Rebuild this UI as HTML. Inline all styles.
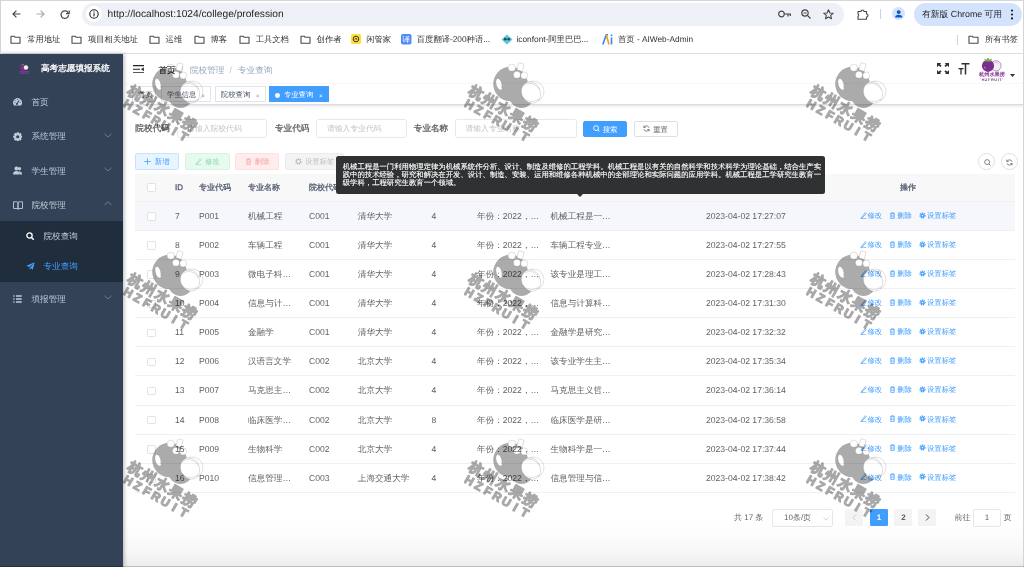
<!DOCTYPE html>
<html><head><meta charset="utf-8">
<style>
*{box-sizing:border-box;margin:0;padding:0}
html,body{width:1024px;height:567px;overflow:hidden;background:#fff}
#wrap{position:absolute;left:0;top:0;width:1024px;height:567px;will-change:transform}
body{font-family:"Liberation Sans",sans-serif;text-rendering:geometricPrecision;position:relative;color:#606266}
.abs{position:absolute}
/* browser chrome */
#top{position:absolute;left:0;top:0;width:1024px;height:27px;background:#fff;box-shadow:inset 0 1px 0 #d6d6d6}
#bmbar{position:absolute;left:0;top:27px;width:1024px;height:26.5px;background:#fff;border-bottom:1px solid #e3e3e3}
#leftedge{position:absolute;left:0;top:0;width:1px;height:53px;background:#d3d3d8;z-index:50}
#rightedge{position:absolute;left:1022.8px;top:0;width:1.2px;height:567px;background:#d5d5d5;z-index:50}
#botedge{position:absolute;left:0;top:565.6px;width:1024px;height:1.4px;background:rgba(0,0,0,0.25);z-index:50}
.pill{position:absolute;left:82.3px;top:3px;width:761.5px;height:22.5px;border-radius:11.25px;background:#edf0f6}
.url{position:absolute;left:107.5px;top:7.5px;font-size:10.2px;color:#1f1f1f;white-space:nowrap;line-height:13px}
.bm{position:absolute;top:26.3px;height:26px;display:flex;align-items:center;white-space:nowrap;font-size:8.3px;color:#333}
.bm svg{margin-right:6px}
.bm span{line-height:10px}
/* sidebar */
#side{position:absolute;left:0;top:53.5px;width:123px;height:514px;background:#334256;z-index:10;box-shadow:1px 0 4px rgba(0,21,41,.32)}
.logo-t{position:absolute;left:41px;top:62px;font-size:8.6px;-webkit-text-stroke:0.3px #fff;color:#fff;white-space:nowrap;line-height:12px}
.mi{position:absolute;left:0;width:123px;height:34.4px;color:#bfcbd9;font-size:8.6px;white-space:nowrap}
.mi .t{position:absolute;left:31.5px;top:0;line-height:34.4px}
.mi .ic{position:absolute;left:12.5px;top:12.7px}
.mi .chev{position:absolute;left:103.5px;top:13.3px}
.sub{position:absolute;left:0;top:220.6px;width:123px;height:61.4px;background:#1f2d3d}
.si{position:absolute;left:0;width:123px;height:30.7px;font-size:8.6px;white-space:nowrap}
.si .t{position:absolute;left:43.5px;line-height:30.7px}
.si .ic{position:absolute;left:25.5px;top:11px}
/* navbar */
#nav{position:absolute;left:123px;top:53.5px;width:900px;height:30.7px;background:#fff;box-shadow:0 1px 4px rgba(0,21,41,.08)}
.bc{position:absolute;top:63.5px;font-size:8.6px;line-height:12px;white-space:nowrap}
/* tags */
#tags{position:absolute;left:123px;top:84.2px;width:900px;height:20.9px;background:#fff;border-bottom:1px solid #d8dce5;box-shadow:0 1px 3px 0 rgba(0,0,0,.12),0 0 3px 0 rgba(0,0,0,.04)}
.tag{position:absolute;top:86.4px;height:16px;border:0.6px solid #e1e4ea;background:#fff;color:#495060;font-size:7.37px;line-height:15px;white-space:nowrap}
.tag .x{position:absolute;top:1.3px;font-size:6.5px;color:#999}
/* form */
.lbl{position:absolute;top:122px;font-size:8.6px;-webkit-text-stroke:0.3px #606266;color:#606266;line-height:12px;white-space:nowrap}
.inp{position:absolute;top:118.8px;height:19.3px;border:0.6px solid #e6e8ec;border-radius:2.5px;background:#fff}
.inp span{position:absolute;left:9.5px;top:0;line-height:18.5px;font-size:7.8px;color:#c0c4cc;white-space:nowrap}
.btn{position:absolute;height:16.6px;border-radius:2px;font-size:7.37px;line-height:15.4px;white-space:nowrap;text-align:center;border:0.6px solid}
/* table */
#tbl{position:absolute;left:135px;top:174px;width:879.5px;height:320px}
.th{position:absolute;left:0;top:0;width:879.5px;height:28px;background:#f8f8f9;border-bottom:0.6px solid #eef0f4}
.th span{position:absolute;top:0;line-height:27.4px;font-size:8px;-webkit-text-stroke:0.28px #515a6e;color:#515a6e;white-space:nowrap}
.tr{position:absolute;left:0;width:879.5px;height:29.08px;border-bottom:0.6px solid #eef0f4}
.td{position:absolute;top:0;line-height:28.6px;font-size:8.6px;color:#606266;white-space:nowrap}
.cb{position:absolute;left:12.3px;top:10.3px;width:8.6px;height:8.6px;border:0.6px solid #dfe2e8;border-radius:1.3px;background:#fff}
.ops{position:absolute;left:724.5px;top:0;line-height:28.6px;font-size:7.37px;color:#409eff;white-space:nowrap}
.op{margin-right:7px}
.op svg{vertical-align:-0.5px;margin-right:1px}
.circ{position:absolute;top:153px;width:16.8px;height:16.8px;border:0.6px solid #dcdfe6;border-radius:50%;background:#fff}
/* tooltip */
#tip{position:absolute;left:336.3px;top:155.6px;width:488.7px;height:38px;background:#303133;border-radius:2.5px;color:#fff;font-size:7.37px;line-height:8.1px;padding:7.3px 6.4px;z-index:20;-webkit-text-stroke:0.12px #fff}
.tl{white-space:nowrap;height:8.1px}
#tip:after{content:"";position:absolute;left:241px;bottom:-3.6px;border-left:3.7px solid transparent;border-right:3.7px solid transparent;border-top:3.7px solid #303133}
/* pagination */
.pg{position:absolute;top:509.3px;height:17px;font-size:8px;line-height:17px;white-space:nowrap;color:#606266}
.pbtn{position:absolute;top:509.3px;height:17px;width:18.2px;background:#f4f4f5;border-radius:1.3px;text-align:center;font-size:8px;font-weight:bold;line-height:17px;color:#606266}
.wmw{position:absolute;pointer-events:none}
#main{position:absolute;left:123px;top:54px;width:900px;height:513px;overflow:hidden;z-index:30;pointer-events:none}
#botfade{position:absolute;left:123px;top:518px;width:900px;height:48px;background:linear-gradient(rgba(0,0,0,0),rgba(0,0,0,0.012) 40%,rgba(0,0,0,0.035) 75%,rgba(0,0,0,0.075));z-index:40}
</style></head><body><div id="wrap">
<div id="top">
 <svg class="abs" style="left:11.5px;top:10px" width="9" height="8" viewBox="0 0 9 8"><path d="M8.5 4 H1 M4.4 0.6 L1 4 L4.4 7.4" fill="none" stroke="#474747" stroke-width="1.2"/></svg>
 <svg class="abs" style="left:35.5px;top:10px" width="9" height="8" viewBox="0 0 9 8"><path d="M0.5 4 H8 M4.6 0.6 L8 4 L4.6 7.4" fill="none" stroke="#a8a8a8" stroke-width="1.1"/></svg>
 <svg class="abs" style="left:59.5px;top:9.5px" width="10" height="9" viewBox="0 0 10 9"><path d="M8.3 3 A3.8 3.8 0 1 0 8.6 5.2" fill="none" stroke="#474747" stroke-width="1.2"/><path d="M9.2 0.4 V3.6 H6" fill="none" stroke="#474747" stroke-width="1.2"/></svg>
 <div class="pill"></div>
 <div class="abs" style="left:85.7px;top:5.7px;width:16px;height:16px;border-radius:50%;background:#fff"></div>
 <svg class="abs" style="left:88.6px;top:8.6px" width="10" height="10" viewBox="0 0 10 10"><circle cx="5" cy="5" r="4.2" fill="none" stroke="#1f1f1f" stroke-width="1.1"/><rect x="4.45" y="4.2" width="1.1" height="3.2" fill="#1f1f1f"/><circle cx="5" cy="2.9" r="0.65" fill="#1f1f1f"/></svg>
 <div class="url">http://localhost:1024/college/profession</div>
 <svg class="abs" style="left:778px;top:10px" width="14" height="8" viewBox="0 0 14 8"><circle cx="3.5" cy="4" r="2.8" fill="none" stroke="#474747" stroke-width="1.2"/><path d="M6.3 4 H13 M10 4 V6.5 M12.3 4 V6" fill="none" stroke="#474747" stroke-width="1.2"/></svg>
 <svg class="abs" style="left:801px;top:9px" width="10" height="10" viewBox="0 0 10 10"><circle cx="4" cy="4" r="3.2" fill="none" stroke="#474747" stroke-width="1.2"/><path d="M6.4 6.4 L9.5 9.5 M2.5 4 H5.5" fill="none" stroke="#474747" stroke-width="1.2"/></svg>
 <svg class="abs" style="left:822.5px;top:8.5px" width="11" height="11" viewBox="0 0 11 11"><path d="M5.5 0.8 L6.9 4 L10.3 4.2 L7.7 6.4 L8.5 9.8 L5.5 8 L2.5 9.8 L3.3 6.4 L0.7 4.2 L4.1 4 Z" fill="none" stroke="#474747" stroke-width="1.1" stroke-linejoin="round"/></svg>
 <svg class="abs" style="left:856.5px;top:8.5px" width="12" height="11" viewBox="0 0 12 11"><path d="M1 2.5 H4 A1.5 1.5 0 0 1 7 2.5 H9.5 V5 A1.5 1.5 0 0 1 9.5 8 V10.2 H1 V7.5 A1.5 1.5 0 0 0 1 5 Z" fill="none" stroke="#474747" stroke-width="1.1" stroke-linejoin="round"/></svg>
 <div class="abs" style="left:880px;top:8.5px;width:1px;height:10.5px;background:#c8d3e6"></div>
 <div class="abs" style="left:891.5px;top:7px;width:13.4px;height:13.4px;border-radius:50%;background:#d3e3fd"></div>
 <svg class="abs" style="left:893.5px;top:9px" width="9.4" height="9.4" viewBox="0 0 10 10"><circle cx="5" cy="3.3" r="2.1" fill="#0b57d0"/><path d="M1.2 9 A3.8 3 0 0 1 8.8 9 Z" fill="#0b57d0"/></svg>
 <div class="abs" style="left:914px;top:3px;width:107.7px;height:22.8px;border-radius:11.4px;background:#d3e3fd"></div>
 <div class="abs" style="left:922px;top:8px;font-size:8.8px;line-height:12px;color:#1f1f1f;white-space:nowrap">有新版 Chrome 可用</div>
 <svg class="abs" style="left:1009.5px;top:8.5px" width="4" height="11" viewBox="0 0 4 11"><circle cx="2" cy="1.6" r="1.1" fill="#1f1f1f"/><circle cx="2" cy="5.5" r="1.1" fill="#1f1f1f"/><circle cx="2" cy="9.4" r="1.1" fill="#1f1f1f"/></svg>
</div>
<div id="bmbar"></div>
<div class="bm" style="left:10.2px"><svg class="fold" width="11" height="9" viewBox="0 0 11 9"><path d="M1 1.2 H4.2 L5.2 2.3 H10 V8.2 H1 Z" fill="none" stroke="#4a4a4a" stroke-width="1.1" stroke-linejoin="round"/></svg><span>常用地址</span></div>
<div class="bm" style="left:71px"><svg class="fold" width="11" height="9" viewBox="0 0 11 9"><path d="M1 1.2 H4.2 L5.2 2.3 H10 V8.2 H1 Z" fill="none" stroke="#4a4a4a" stroke-width="1.1" stroke-linejoin="round"/></svg><span>项目相关地址</span></div>
<div class="bm" style="left:148.6px"><svg class="fold" width="11" height="9" viewBox="0 0 11 9"><path d="M1 1.2 H4.2 L5.2 2.3 H10 V8.2 H1 Z" fill="none" stroke="#4a4a4a" stroke-width="1.1" stroke-linejoin="round"/></svg><span>运维</span></div>
<div class="bm" style="left:193.5px"><svg class="fold" width="11" height="9" viewBox="0 0 11 9"><path d="M1 1.2 H4.2 L5.2 2.3 H10 V8.2 H1 Z" fill="none" stroke="#4a4a4a" stroke-width="1.1" stroke-linejoin="round"/></svg><span>博客</span></div>
<div class="bm" style="left:238.7px"><svg class="fold" width="11" height="9" viewBox="0 0 11 9"><path d="M1 1.2 H4.2 L5.2 2.3 H10 V8.2 H1 Z" fill="none" stroke="#4a4a4a" stroke-width="1.1" stroke-linejoin="round"/></svg><span>工具文档</span></div>
<div class="bm" style="left:299.6px"><svg class="fold" width="11" height="9" viewBox="0 0 11 9"><path d="M1 1.2 H4.2 L5.2 2.3 H10 V8.2 H1 Z" fill="none" stroke="#4a4a4a" stroke-width="1.1" stroke-linejoin="round"/></svg><span>创作者</span></div>
<div class="bm" style="left:350.7px"><svg width="10" height="10" viewBox="0 0 10 10" style="margin-right:5.5px"><rect width="10" height="10" rx="1.5" fill="#ffe033"/><circle cx="5" cy="5" r="2.8" fill="none" stroke="#333" stroke-width="1"/><path d="M3.8 5.5 L5 4 L6 6" fill="none" stroke="#333" stroke-width="0.8"/></svg><span>闲管家</span></div>
<div class="bm" style="left:401.3px"><svg width="10.5" height="10.5" viewBox="0 0 10 10" style="margin-right:5px"><rect width="10" height="10" rx="1.8" fill="#4e8cf7"/><text x="5" y="7.9" font-size="7.5" fill="#fff" text-anchor="middle" font-family="Liberation Sans">译</text></svg><span>百度翻译-200种语...</span></div>
<div class="bm" style="left:500.5px"><svg width="12" height="11" viewBox="0 0 12 11" style="margin-right:4px"><path d="M6 0.5 L11.5 5.5 L6 10.5 L0.5 5.5 Z" fill="#5fc7d6"/><circle cx="4.3" cy="5.2" r="1.4" fill="#1d4e63"/><circle cx="7.7" cy="5.2" r="1.4" fill="#1d4e63"/></svg><span>iconfont-阿里巴巴...</span></div>
<div class="bm" style="left:602px"><svg width="11" height="11" viewBox="0 0 11 11" style="margin-right:5px"><path d="M0.8 10.5 L4.3 0.8 L6 0.8" fill="none" stroke="#3b82f6" stroke-width="1.6"/><path d="M4.3 0.8 L7 10.5" fill="none" stroke="#f59e0b" stroke-width="1.6"/><path d="M9.5 3.5 V10.5" fill="none" stroke="#3b82f6" stroke-width="1.6"/><circle cx="9.5" cy="1.4" r="0.9" fill="#3b82f6"/></svg><span>首页 - AIWeb-Admin</span></div>
<div class="abs" style="left:956.5px;top:34.5px;width:1px;height:10px;background:#c8d3e6"></div>
<div class="bm" style="left:967.9px"><svg class="fold" width="11" height="9" viewBox="0 0 11 9"><path d="M1 1.2 H4.2 L5.2 2.3 H10 V8.2 H1 Z" fill="none" stroke="#4a4a4a" stroke-width="1.1" stroke-linejoin="round"/></svg><span>所有书签</span></div>

<div id="side">
 <svg class="abs" style="left:17.5px;top:10px" width="13" height="10" viewBox="0 0 13 10"><circle cx="5.2" cy="3.8" r="3" fill="#7b2d8e"/><circle cx="8" cy="3.5" r="2.2" fill="#eee"/><path d="M3.5 1 L5 0.2 L6 1" stroke="#6a9a3a" stroke-width="0.9" fill="none"/><rect x="1.5" y="7.3" width="10" height="1.1" fill="#8b3a9e"/><rect x="2.5" y="8.9" width="8" height="0.8" fill="#8b3a9e"/></svg>
 <div class="logo-t" style="top:8.6px">高考志愿填报系统</div>
</div>
<div class="mi" style="top:85px;z-index:11">
 <svg class="ic" style="top:13px" width="9.2" height="7.6" viewBox="0 0 10 8.2"><path d="M1.2 8 A4.8 4.8 0 1 1 8.8 8 Z" fill="#bfcbd9"/><path d="M4.3 6.6 L6.6 2.6" stroke="#334256" stroke-width="1.2"/><circle cx="4.2" cy="6.5" r="1.1" fill="#334256"/><path d="M1.6 4.8 H2.7 M7.4 4.8 H8.4 M5 1 V2.1 M2.4 2.3 L3.1 3" stroke="#334256" stroke-width="0.8"/></svg>
 <span class="t">首页</span></div>
<div class="mi" style="top:119.4px;z-index:11">
 <svg class="ic" width="9.5" height="9.5" viewBox="0 0 10 10" style="top:12.5px"><path d="M9.78 3.93 L9.78 6.07 L8.34 6.34 L8.31 6.42 L9.14 7.63 L7.63 9.14 L6.42 8.31 L6.34 8.34 L6.07 9.78 L3.93 9.78 L3.66 8.34 L3.58 8.31 L2.37 9.14 L0.86 7.63 L1.69 6.42 L1.66 6.34 L0.22 6.07 L0.22 3.93 L1.66 3.66 L1.69 3.58 L0.86 2.37 L2.37 0.86 L3.58 1.69 L3.66 1.66 L3.93 0.22 L6.07 0.22 L6.34 1.66 L6.42 1.69 L7.63 0.86 L9.14 2.37 L8.31 3.58 L8.34 3.66 Z M5 3.3 A1.7 1.7 0 1 0 5 6.7 A1.7 1.7 0 1 0 5 3.3 Z" fill="#bfcbd9" fill-rule="evenodd"/></svg>
 <span class="t">系统管理</span>
 <svg class="chev" width="8" height="5" viewBox="0 0 8 5"><path d="M0.5 0.8 L4 4 L7.5 0.8" fill="none" stroke="#909399" stroke-width="0.7"/></svg></div>
<div class="mi" style="top:153.8px;z-index:11">
 <svg class="ic" width="9" height="9" viewBox="0 0 10 10"><circle cx="3.8" cy="2.8" r="2.2" fill="#bfcbd9"/><path d="M0 9.5 A3.8 4 0 0 1 7.6 9.5 Z" fill="#bfcbd9"/><circle cx="7.2" cy="3" r="1.8" fill="#bfcbd9"/><path d="M6.5 6 A3 3 0 0 1 10 9.5 H8" fill="#bfcbd9"/></svg>
 <span class="t">学生管理</span>
 <svg class="chev" width="8" height="5" viewBox="0 0 8 5"><path d="M0.5 0.8 L4 4 L7.5 0.8" fill="none" stroke="#909399" stroke-width="0.7"/></svg></div>
<div class="mi" style="top:188.2px;z-index:11">
 <svg class="ic" width="10" height="9" viewBox="0 0 10 9"><path d="M0.5 0.8 H4 A1 1 0 0 1 5 1.8 V8.3 A1 1 0 0 0 4 7.5 H0.5 Z M9.5 0.8 H6 A1 1 0 0 0 5 1.8 V8.3 A1 1 0 0 1 6 7.5 H9.5 Z" fill="none" stroke="#bfcbd9" stroke-width="0.9"/></svg>
 <span class="t">院校管理</span>
 <svg class="chev" width="8" height="5" viewBox="0 0 8 5"><path d="M0.5 4 L4 0.8 L7.5 4" fill="none" stroke="#909399" stroke-width="0.7"/></svg></div>
<div class="sub" style="z-index:11">
 <div class="si" style="top:0;color:#bfcbd9">
  <svg class="ic" width="8.5" height="8.5" viewBox="0 0 9 9"><circle cx="3.7" cy="3.7" r="2.8" fill="none" stroke="#fff" stroke-width="1.4"/><path d="M5.8 5.8 L8.3 8.3" stroke="#fff" stroke-width="1.6"/></svg>
  <span class="t">院校查询</span></div>
 <div class="si" style="top:30.7px;color:#409eff">
  <svg class="ic" width="9" height="8" viewBox="0 0 9 8"><path d="M0.3 3.8 L8.7 0.3 L6.8 7.7 L4.2 5.6 L7.5 1.6 L3.2 5 Z M3.3 5.3 L3.8 7.8 L4.8 6.2" fill="#409eff"/></svg>
  <span class="t">专业查询</span></div>
</div>
<div class="mi" style="top:282px;z-index:11">
 <svg class="ic" width="9" height="8" viewBox="0 0 9 8"><path d="M0.3 1 H1.6 M3 1 H8.7 M0.3 4 H1.6 M3 4 H8.7 M0.3 7 H1.6 M3 7 H8.7" stroke="#bfcbd9" stroke-width="1.3"/></svg>
 <span class="t">填报管理</span>
 <svg class="chev" width="8" height="5" viewBox="0 0 8 5"><path d="M0.5 0.8 L4 4 L7.5 0.8" fill="none" stroke="#909399" stroke-width="0.7"/></svg></div>

<div id="nav"></div>
<svg class="abs" style="left:133px;top:64.5px" width="11" height="8.5" viewBox="0 0 11 8.5"><path d="M0 0.6 H11 M0 4.25 H7 M0 7.9 H11" stroke="#222" stroke-width="1.1"/><path d="M10.8 2.3 V6.2 L8 4.25 Z" fill="#222"/></svg>
<div class="bc" style="left:158.5px;color:#303133;-webkit-text-stroke:0.15px #303133">首页</div>
<div class="bc" style="left:181px;color:#c0c4cc">/</div>
<div class="bc" style="left:190px;color:#97a8be">院校管理</div>
<div class="bc" style="left:229.5px;color:#c0c4cc">/</div>
<div class="bc" style="left:238px;color:#97a8be">专业查询</div>
<svg class="abs" style="left:937px;top:63.2px" width="12" height="11.3" viewBox="0 0 12 11.3"><g fill="#303133"><path d="M0 0 H4.2 L3 1.2 L4.6 2.8 L3.3 4.1 L1.7 2.5 L0 4.2 Z"/><path d="M12 0 H7.8 L9 1.2 L7.4 2.8 L8.7 4.1 L10.3 2.5 L12 4.2 Z"/><path d="M0 11.3 H4.2 L3 10.1 L4.6 8.5 L3.3 7.2 L1.7 8.8 L0 7.1 Z"/><path d="M12 11.3 H7.8 L9 10.1 L7.4 8.5 L8.7 7.2 L10.3 8.8 L12 7.1 Z"/></g></svg>
<svg class="abs" style="left:957.5px;top:63px" width="12" height="11.5" viewBox="0 0 12 11.5"><g fill="#303133"><rect x="0.5" y="5" width="5" height="1.3"/><rect x="2.35" y="5" width="1.3" height="6.5"/><rect x="3.5" y="0" width="8" height="1.5"/><rect x="6.75" y="0" width="1.5" height="11.5"/></g></svg>
<svg class="abs" style="left:978px;top:56px" width="28" height="26" viewBox="0 0 28 26"><circle cx="18" cy="9.8" r="5.1" fill="#f4eef6" stroke="#7b3b8f" stroke-width="0.5"/><path d="M15.5 7.5 A3 3 0 0 1 20.5 8" fill="none" stroke="#b99ac4" stroke-width="0.5"/><circle cx="10" cy="9.8" r="6.1" fill="#7a2f8f"/><path d="M6.5 2.2 L8.5 3.8 L10 1.6 L11.5 3.8 L14 2.5 L13 5.5 L7 5.5 Z" fill="#6fae4a"/><path d="M6 11 L7.6 12.4" stroke="#d9b6e3" stroke-width="0.8"/><text x="14" y="19.8" font-size="5.2" font-weight="700" fill="#7a2f8f" text-anchor="middle" font-family="Liberation Sans">杭州水果捞</text><text x="14" y="24.6" font-size="3.8" font-weight="700" fill="#7a2f8f" text-anchor="middle" letter-spacing="0.6" font-family="Liberation Sans">'HZFRUIT'</text></svg>
<svg class="abs" style="left:1009.5px;top:74px" width="5" height="3" viewBox="0 0 5 3"><path d="M0 0 H5 L2.5 3 Z" fill="#303133"/></svg>

<div id="tags"></div>
<div class="tag" style="left:132.2px;width:24.3px;padding-left:5px">首页</div>
<div class="tag" style="left:160.7px;width:50.8px;padding-left:5.2px">学生信息<span class="x" style="left:39.5px">×</span></div>
<div class="tag" style="left:214.8px;width:51.6px;padding-left:5px">院校查询<span class="x" style="left:40px">×</span></div>
<div class="tag" style="left:269.4px;width:59.3px;padding-left:13.5px;background:#42b983;border-color:#42b983;color:#fff;background:#409eff;border-color:#409eff"><span class="abs" style="left:5px;top:5.3px;width:4.9px;height:4.9px;border-radius:50%;background:#fff"></span>专业查询<span class="x" style="left:48.5px;color:#fff">×</span></div>

<div class="lbl" style="left:135.3px">院校代码</div>
<div class="inp" style="left:176.6px;width:90.8px"><span>请输入院校代码</span></div>
<div class="lbl" style="left:275px">专业代码</div>
<div class="inp" style="left:316.4px;width:90.9px"><span>请输入专业代码</span></div>
<div class="lbl" style="left:413.8px">专业名称</div>
<div class="inp" style="left:455px;width:122.3px"><span>请输入专业名称</span></div>
<div class="btn" style="left:583.1px;top:120.8px;width:43.9px;background:#409eff;border-color:#409eff;color:#fff"><svg width="7" height="7" viewBox="0 0 10 10" style="vertical-align:-0.5px;margin-right:3px"><circle cx="4.4" cy="4.4" r="3.5" fill="none" stroke="#fff" stroke-width="1.3"/><path d="M7 7 L9.3 9.3" stroke="#fff" stroke-width="1.3"/></svg>搜索</div>
<div class="btn" style="left:633.5px;top:120.8px;width:44px;background:#fff;border-color:#dcdfe6;color:#606266"><svg width="7" height="7" viewBox="0 0 10 10" style="vertical-align:-0.5px;margin-right:3px"><path d="M8.6 4 A3.8 3.8 0 0 0 1.6 3.2 M1.4 6 A3.8 3.8 0 0 0 8.4 6.8" fill="none" stroke="#606266" stroke-width="1.1"/><path d="M1.2 0.8 V3.6 H3.8 M8.8 9.2 V6.4 H6.2" fill="none" stroke="#606266" stroke-width="1.1"/></svg>重置</div>

<div class="btn" style="left:135px;top:153px;width:43.8px;background:#e8f4ff;border-color:#c6e2ff;color:#409eff"><svg width="7" height="7" viewBox="0 0 10 10" style="vertical-align:-0.5px;margin-right:3.5px"><path d="M5 0.5 V9.5 M0.5 5 H9.5" stroke="#409eff" stroke-width="1.1"/></svg>新增</div>
<div class="btn" style="left:185.2px;top:153px;width:44.5px;background:#e7faf0;border-color:#d8f3e3;color:#89dcaa"><svg width="7" height="7" viewBox="0 0 10 10" style="vertical-align:-0.5px;margin-right:3px"><path d="M2 8 L1.5 9 L2.8 8.6 L9 2.4 L7.6 1 Z M1 9.6 H9" fill="none" stroke="#89dcaa" stroke-width="1"/></svg>修改</div>
<div class="btn" style="left:235px;top:153px;width:44.4px;background:#ffeded;border-color:#ffe0e0;color:#f7a3a3"><svg width="7" height="7" viewBox="0 0 10 10" style="vertical-align:-0.5px;margin-right:3px"><path d="M1.5 2.5 H8.5 M3.5 2.5 V1 H6.5 V2.5 M2.5 2.5 V9.2 H7.5 V2.5 M4 4.5 V7.5 M6 4.5 V7.5" fill="none" stroke="#f7a3a3" stroke-width="1"/></svg>删除</div>
<div class="btn" style="left:285.2px;top:153px;width:59px;background:#f4f4f5;border-color:#ebebed;color:#bcbec2"><svg width="7" height="7" viewBox="0 0 10 10" style="vertical-align:-0.5px;margin-right:3px"><circle cx="5" cy="5" r="3.2" fill="none" stroke="#a8aaae" stroke-width="2.4" stroke-dasharray="1.6 0.9"/><circle cx="5" cy="5" r="1.3" fill="#f4f4f5"/></svg>设置标签</div>
<div class="circ" style="left:978.2px"><svg class="abs" style="left:4.6px;top:4.6px" width="7" height="7" viewBox="0 0 10 10"><circle cx="4.4" cy="4.4" r="3.5" fill="none" stroke="#606266" stroke-width="1.1"/><path d="M7 7 L9.3 9.3" stroke="#606266" stroke-width="1.1"/></svg></div>
<div class="circ" style="left:1000.8px"><svg class="abs" style="left:4.6px;top:4.6px" width="7" height="7" viewBox="0 0 10 10"><path d="M8.6 4 A3.8 3.8 0 0 0 1.6 3.2 M1.4 6 A3.8 3.8 0 0 0 8.4 6.8" fill="none" stroke="#606266" stroke-width="1.1"/><path d="M1.2 0.8 V3.6 H3.8 M8.8 9.2 V6.4 H6.2" fill="none" stroke="#606266" stroke-width="1.1"/></svg></div>

<div id="tbl">
 <div class="th"><span class="cb" style="top:9.3px"></span>
  <span style="left:40px">ID</span><span style="left:64px">专业代码</span><span style="left:113px">专业名称</span><span style="left:174px">院校代码</span><span style="left:222.8px">院校名称</span><span style="left:296.5px">学制</span><span style="left:342px">招生信息</span><span style="left:415.5px">专业介绍</span><span style="left:570px">创建时间</span><span style="left:765px">操作</span>
 </div>
<div class="tr" style="top:28.00px;background:#f5f7fa"><span class="cb"></span><span class="td" style="left:40px">7</span><span class="td" style="left:64px">P001</span><span class="td" style="left:113px">机械工程</span><span class="td" style="left:174px">C001</span><span class="td" style="left:222.8px">清华大学</span><span class="td" style="left:296.5px">4</span><span class="td" style="left:342px">年份：2022，…</span><span class="td" style="left:415.5px">机械工程是一…</span><span class="td" style="left:571px">2023-04-02 17:27:07</span><span class="ops"><span class="op"><svg width="7" height="7" viewBox="0 0 10 10"><path d="M2 8 L1.5 9 L2.8 8.6 L9 2.4 L7.6 1 Z M1 9.6 H9" fill="none" stroke="#409eff" stroke-width="1"/></svg>修改</span><span class="op"><svg width="7" height="7" viewBox="0 0 10 10"><path d="M1.5 2.5 H8.5 M3.5 2.5 V1 H6.5 V2.5 M2.5 2.5 V9.2 H7.5 V2.5 M4 4.5 V7.5 M6 4.5 V7.5" fill="none" stroke="#409eff" stroke-width="1"/></svg>删除</span><span class="op"><svg width="7" height="7" viewBox="0 0 10 10"><circle cx="5" cy="5" r="3.2" fill="none" stroke="#409eff" stroke-width="2.4" stroke-dasharray="1.6 0.9"/><circle cx="5" cy="5" r="2.6" fill="#409eff"/><circle cx="5" cy="5" r="1.1" fill="#fff"/></svg>设置标签</span></span></div>
<div class="tr" style="top:57.08px;background:#fff"><span class="cb"></span><span class="td" style="left:40px">8</span><span class="td" style="left:64px">P002</span><span class="td" style="left:113px">车辆工程</span><span class="td" style="left:174px">C001</span><span class="td" style="left:222.8px">清华大学</span><span class="td" style="left:296.5px">4</span><span class="td" style="left:342px">年份：2022，…</span><span class="td" style="left:415.5px">车辆工程专业…</span><span class="td" style="left:571px">2023-04-02 17:27:55</span><span class="ops"><span class="op"><svg width="7" height="7" viewBox="0 0 10 10"><path d="M2 8 L1.5 9 L2.8 8.6 L9 2.4 L7.6 1 Z M1 9.6 H9" fill="none" stroke="#409eff" stroke-width="1"/></svg>修改</span><span class="op"><svg width="7" height="7" viewBox="0 0 10 10"><path d="M1.5 2.5 H8.5 M3.5 2.5 V1 H6.5 V2.5 M2.5 2.5 V9.2 H7.5 V2.5 M4 4.5 V7.5 M6 4.5 V7.5" fill="none" stroke="#409eff" stroke-width="1"/></svg>删除</span><span class="op"><svg width="7" height="7" viewBox="0 0 10 10"><circle cx="5" cy="5" r="3.2" fill="none" stroke="#409eff" stroke-width="2.4" stroke-dasharray="1.6 0.9"/><circle cx="5" cy="5" r="2.6" fill="#409eff"/><circle cx="5" cy="5" r="1.1" fill="#fff"/></svg>设置标签</span></span></div>
<div class="tr" style="top:86.16px;background:#fff"><span class="cb"></span><span class="td" style="left:40px">9</span><span class="td" style="left:64px">P003</span><span class="td" style="left:113px">微电子科…</span><span class="td" style="left:174px">C001</span><span class="td" style="left:222.8px">清华大学</span><span class="td" style="left:296.5px">4</span><span class="td" style="left:342px">年份：2022，…</span><span class="td" style="left:415.5px">该专业是理工…</span><span class="td" style="left:571px">2023-04-02 17:28:43</span><span class="ops"><span class="op"><svg width="7" height="7" viewBox="0 0 10 10"><path d="M2 8 L1.5 9 L2.8 8.6 L9 2.4 L7.6 1 Z M1 9.6 H9" fill="none" stroke="#409eff" stroke-width="1"/></svg>修改</span><span class="op"><svg width="7" height="7" viewBox="0 0 10 10"><path d="M1.5 2.5 H8.5 M3.5 2.5 V1 H6.5 V2.5 M2.5 2.5 V9.2 H7.5 V2.5 M4 4.5 V7.5 M6 4.5 V7.5" fill="none" stroke="#409eff" stroke-width="1"/></svg>删除</span><span class="op"><svg width="7" height="7" viewBox="0 0 10 10"><circle cx="5" cy="5" r="3.2" fill="none" stroke="#409eff" stroke-width="2.4" stroke-dasharray="1.6 0.9"/><circle cx="5" cy="5" r="2.6" fill="#409eff"/><circle cx="5" cy="5" r="1.1" fill="#fff"/></svg>设置标签</span></span></div>
<div class="tr" style="top:115.24px;background:#fff"><span class="cb"></span><span class="td" style="left:40px">10</span><span class="td" style="left:64px">P004</span><span class="td" style="left:113px">信息与计…</span><span class="td" style="left:174px">C001</span><span class="td" style="left:222.8px">清华大学</span><span class="td" style="left:296.5px">4</span><span class="td" style="left:342px">年份：2022，…</span><span class="td" style="left:415.5px">信息与计算科…</span><span class="td" style="left:571px">2023-04-02 17:31:30</span><span class="ops"><span class="op"><svg width="7" height="7" viewBox="0 0 10 10"><path d="M2 8 L1.5 9 L2.8 8.6 L9 2.4 L7.6 1 Z M1 9.6 H9" fill="none" stroke="#409eff" stroke-width="1"/></svg>修改</span><span class="op"><svg width="7" height="7" viewBox="0 0 10 10"><path d="M1.5 2.5 H8.5 M3.5 2.5 V1 H6.5 V2.5 M2.5 2.5 V9.2 H7.5 V2.5 M4 4.5 V7.5 M6 4.5 V7.5" fill="none" stroke="#409eff" stroke-width="1"/></svg>删除</span><span class="op"><svg width="7" height="7" viewBox="0 0 10 10"><circle cx="5" cy="5" r="3.2" fill="none" stroke="#409eff" stroke-width="2.4" stroke-dasharray="1.6 0.9"/><circle cx="5" cy="5" r="2.6" fill="#409eff"/><circle cx="5" cy="5" r="1.1" fill="#fff"/></svg>设置标签</span></span></div>
<div class="tr" style="top:144.32px;background:#fff"><span class="cb"></span><span class="td" style="left:40px">11</span><span class="td" style="left:64px">P005</span><span class="td" style="left:113px">金融学</span><span class="td" style="left:174px">C001</span><span class="td" style="left:222.8px">清华大学</span><span class="td" style="left:296.5px">4</span><span class="td" style="left:342px">年份：2022，…</span><span class="td" style="left:415.5px">金融学是研究…</span><span class="td" style="left:571px">2023-04-02 17:32:32</span><span class="ops"><span class="op"><svg width="7" height="7" viewBox="0 0 10 10"><path d="M2 8 L1.5 9 L2.8 8.6 L9 2.4 L7.6 1 Z M1 9.6 H9" fill="none" stroke="#409eff" stroke-width="1"/></svg>修改</span><span class="op"><svg width="7" height="7" viewBox="0 0 10 10"><path d="M1.5 2.5 H8.5 M3.5 2.5 V1 H6.5 V2.5 M2.5 2.5 V9.2 H7.5 V2.5 M4 4.5 V7.5 M6 4.5 V7.5" fill="none" stroke="#409eff" stroke-width="1"/></svg>删除</span><span class="op"><svg width="7" height="7" viewBox="0 0 10 10"><circle cx="5" cy="5" r="3.2" fill="none" stroke="#409eff" stroke-width="2.4" stroke-dasharray="1.6 0.9"/><circle cx="5" cy="5" r="2.6" fill="#409eff"/><circle cx="5" cy="5" r="1.1" fill="#fff"/></svg>设置标签</span></span></div>
<div class="tr" style="top:173.40px;background:#fff"><span class="cb"></span><span class="td" style="left:40px">12</span><span class="td" style="left:64px">P006</span><span class="td" style="left:113px">汉语言文学</span><span class="td" style="left:174px">C002</span><span class="td" style="left:222.8px">北京大学</span><span class="td" style="left:296.5px">4</span><span class="td" style="left:342px">年份：2022，…</span><span class="td" style="left:415.5px">该专业学生主…</span><span class="td" style="left:571px">2023-04-02 17:35:34</span><span class="ops"><span class="op"><svg width="7" height="7" viewBox="0 0 10 10"><path d="M2 8 L1.5 9 L2.8 8.6 L9 2.4 L7.6 1 Z M1 9.6 H9" fill="none" stroke="#409eff" stroke-width="1"/></svg>修改</span><span class="op"><svg width="7" height="7" viewBox="0 0 10 10"><path d="M1.5 2.5 H8.5 M3.5 2.5 V1 H6.5 V2.5 M2.5 2.5 V9.2 H7.5 V2.5 M4 4.5 V7.5 M6 4.5 V7.5" fill="none" stroke="#409eff" stroke-width="1"/></svg>删除</span><span class="op"><svg width="7" height="7" viewBox="0 0 10 10"><circle cx="5" cy="5" r="3.2" fill="none" stroke="#409eff" stroke-width="2.4" stroke-dasharray="1.6 0.9"/><circle cx="5" cy="5" r="2.6" fill="#409eff"/><circle cx="5" cy="5" r="1.1" fill="#fff"/></svg>设置标签</span></span></div>
<div class="tr" style="top:202.48px;background:#fff"><span class="cb"></span><span class="td" style="left:40px">13</span><span class="td" style="left:64px">P007</span><span class="td" style="left:113px">马克思主…</span><span class="td" style="left:174px">C002</span><span class="td" style="left:222.8px">北京大学</span><span class="td" style="left:296.5px">4</span><span class="td" style="left:342px">年份：2022，…</span><span class="td" style="left:415.5px">马克思主义哲…</span><span class="td" style="left:571px">2023-04-02 17:36:14</span><span class="ops"><span class="op"><svg width="7" height="7" viewBox="0 0 10 10"><path d="M2 8 L1.5 9 L2.8 8.6 L9 2.4 L7.6 1 Z M1 9.6 H9" fill="none" stroke="#409eff" stroke-width="1"/></svg>修改</span><span class="op"><svg width="7" height="7" viewBox="0 0 10 10"><path d="M1.5 2.5 H8.5 M3.5 2.5 V1 H6.5 V2.5 M2.5 2.5 V9.2 H7.5 V2.5 M4 4.5 V7.5 M6 4.5 V7.5" fill="none" stroke="#409eff" stroke-width="1"/></svg>删除</span><span class="op"><svg width="7" height="7" viewBox="0 0 10 10"><circle cx="5" cy="5" r="3.2" fill="none" stroke="#409eff" stroke-width="2.4" stroke-dasharray="1.6 0.9"/><circle cx="5" cy="5" r="2.6" fill="#409eff"/><circle cx="5" cy="5" r="1.1" fill="#fff"/></svg>设置标签</span></span></div>
<div class="tr" style="top:231.56px;background:#fff"><span class="cb"></span><span class="td" style="left:40px">14</span><span class="td" style="left:64px">P008</span><span class="td" style="left:113px">临床医学…</span><span class="td" style="left:174px">C002</span><span class="td" style="left:222.8px">北京大学</span><span class="td" style="left:296.5px">8</span><span class="td" style="left:342px">年份：2022，…</span><span class="td" style="left:415.5px">临床医学是研…</span><span class="td" style="left:571px">2023-04-02 17:36:58</span><span class="ops"><span class="op"><svg width="7" height="7" viewBox="0 0 10 10"><path d="M2 8 L1.5 9 L2.8 8.6 L9 2.4 L7.6 1 Z M1 9.6 H9" fill="none" stroke="#409eff" stroke-width="1"/></svg>修改</span><span class="op"><svg width="7" height="7" viewBox="0 0 10 10"><path d="M1.5 2.5 H8.5 M3.5 2.5 V1 H6.5 V2.5 M2.5 2.5 V9.2 H7.5 V2.5 M4 4.5 V7.5 M6 4.5 V7.5" fill="none" stroke="#409eff" stroke-width="1"/></svg>删除</span><span class="op"><svg width="7" height="7" viewBox="0 0 10 10"><circle cx="5" cy="5" r="3.2" fill="none" stroke="#409eff" stroke-width="2.4" stroke-dasharray="1.6 0.9"/><circle cx="5" cy="5" r="2.6" fill="#409eff"/><circle cx="5" cy="5" r="1.1" fill="#fff"/></svg>设置标签</span></span></div>
<div class="tr" style="top:260.64px;background:#fff"><span class="cb"></span><span class="td" style="left:40px">15</span><span class="td" style="left:64px">P009</span><span class="td" style="left:113px">生物科学</span><span class="td" style="left:174px">C002</span><span class="td" style="left:222.8px">北京大学</span><span class="td" style="left:296.5px">4</span><span class="td" style="left:342px">年份：2022，…</span><span class="td" style="left:415.5px">生物科学是一…</span><span class="td" style="left:571px">2023-04-02 17:37:44</span><span class="ops"><span class="op"><svg width="7" height="7" viewBox="0 0 10 10"><path d="M2 8 L1.5 9 L2.8 8.6 L9 2.4 L7.6 1 Z M1 9.6 H9" fill="none" stroke="#409eff" stroke-width="1"/></svg>修改</span><span class="op"><svg width="7" height="7" viewBox="0 0 10 10"><path d="M1.5 2.5 H8.5 M3.5 2.5 V1 H6.5 V2.5 M2.5 2.5 V9.2 H7.5 V2.5 M4 4.5 V7.5 M6 4.5 V7.5" fill="none" stroke="#409eff" stroke-width="1"/></svg>删除</span><span class="op"><svg width="7" height="7" viewBox="0 0 10 10"><circle cx="5" cy="5" r="3.2" fill="none" stroke="#409eff" stroke-width="2.4" stroke-dasharray="1.6 0.9"/><circle cx="5" cy="5" r="2.6" fill="#409eff"/><circle cx="5" cy="5" r="1.1" fill="#fff"/></svg>设置标签</span></span></div>
<div class="tr" style="top:289.72px;background:#fff"><span class="cb"></span><span class="td" style="left:40px">16</span><span class="td" style="left:64px">P010</span><span class="td" style="left:113px">信息管理…</span><span class="td" style="left:174px">C003</span><span class="td" style="left:222.8px">上海交通大学</span><span class="td" style="left:296.5px">4</span><span class="td" style="left:342px">年份：2022，…</span><span class="td" style="left:415.5px">信息管理与信…</span><span class="td" style="left:571px">2023-04-02 17:38:42</span><span class="ops"><span class="op"><svg width="7" height="7" viewBox="0 0 10 10"><path d="M2 8 L1.5 9 L2.8 8.6 L9 2.4 L7.6 1 Z M1 9.6 H9" fill="none" stroke="#409eff" stroke-width="1"/></svg>修改</span><span class="op"><svg width="7" height="7" viewBox="0 0 10 10"><path d="M1.5 2.5 H8.5 M3.5 2.5 V1 H6.5 V2.5 M2.5 2.5 V9.2 H7.5 V2.5 M4 4.5 V7.5 M6 4.5 V7.5" fill="none" stroke="#409eff" stroke-width="1"/></svg>删除</span><span class="op"><svg width="7" height="7" viewBox="0 0 10 10"><circle cx="5" cy="5" r="3.2" fill="none" stroke="#409eff" stroke-width="2.4" stroke-dasharray="1.6 0.9"/><circle cx="5" cy="5" r="2.6" fill="#409eff"/><circle cx="5" cy="5" r="1.1" fill="#fff"/></svg>设置标签</span></span></div>
</div>

<div id="tip"><div class="tl">机械工程是一门利用物理定律为机械系统作分析、设计、制造及维修的工程学科。机械工程是以有关的自然科学和技术科学为理论基础，结合生产实</div><div class="tl">践中的技术经验，研究和解决在开发、设计、制造、安装、运用和维修各种机械中的全部理论和实际问题的应用学科。机械工程是工学研究生教育一</div><div class="tl">级学科，工程研究生教育一个领域。</div></div>

<div class="pg" style="left:734px">共 17 条</div>
<div class="abs" style="left:772px;top:509.3px;width:60.8px;height:17.6px;border:0.6px solid #e4e7ed;border-radius:2px;font-size:8px;line-height:16px;color:#606266;padding-left:11px">10条/页<svg class="abs" style="left:50px;top:6.5px" width="6" height="4" viewBox="0 0 6 4"><path d="M0.5 0.5 L3 3.2 L5.5 0.5" fill="none" stroke="#c0c4cc" stroke-width="0.7"/></svg></div>
<div class="pbtn" style="left:845.3px;color:#c0c4cc"><svg width="5" height="7" viewBox="0 0 5 7" style="vertical-align:-0.5px"><path d="M4 0.5 L1 3.5 L4 6.5" fill="none" stroke="#c0c4cc" stroke-width="0.8"/></svg></div>
<div class="pbtn" style="left:869.8px;background:#409eff;color:#fff">1</div>
<div class="pbtn" style="left:894.3px">2</div>
<div class="pbtn" style="left:918.3px"><svg width="5" height="7" viewBox="0 0 5 7" style="vertical-align:-0.5px"><path d="M1 0.5 L4 3.5 L1 6.5" fill="none" stroke="#303133" stroke-width="0.9"/></svg></div>
<div class="pg" style="left:954.6px">前往</div>
<div class="abs" style="left:973.3px;top:509.3px;width:27.3px;height:17.6px;border:0.6px solid #e4e7ed;border-radius:2px;font-size:8px;line-height:16px;color:#606266;text-align:center">1</div>
<div class="pg" style="left:1003.5px">页</div>

<div id="main"><div class="wmw" style="left:-0.5px;top:4px"><svg class="wm" width="120" height="110" viewBox="-45 -25 120 110" style="display:block">
<mask id="M1"><rect x="-45" y="-25" width="120" height="110" fill="#fff"/><g fill="#000"><ellipse cx="2.85" cy="-15.3" rx="3.75" ry="3.5"/><rect x="8.75" y="-19.75" width="5.5" height="7.5" rx="0.8" transform="rotate(15 11.5 -16)"/><circle cx="7.95" cy="-8.25" r="3.55"/><circle cx="15.25" cy="-7.6" r="3.5"/><ellipse cx="-10.1" cy="1" rx="2.5" ry="5.4" transform="rotate(-15 -10.1 1)"/><circle cx="-8.4" cy="5.6" r="1.2"/><ellipse cx="22" cy="9.5" rx="9.4" ry="11" transform="rotate(-25 22 9.5)"/></g></mask>
<g fill="#000" opacity="0.33" mask="url(#M1)"><circle cx="1.5" cy="1" r="17.3"/><circle cx="12.5" cy="12.5" r="12.5"/></g>
<g fill="none" stroke="#000" stroke-opacity="0.28" stroke-width="0.45"><ellipse cx="2.85" cy="-15.3" rx="3.75" ry="3.5"/><rect x="8.75" y="-19.75" width="5.5" height="7.5" rx="0.8" transform="rotate(15 11.5 -16)"/><circle cx="7.95" cy="-8.25" r="3.55"/><circle cx="15.25" cy="-7.6" r="3.5"/>
 <ellipse cx="22" cy="9.5" rx="9.4" ry="11" transform="rotate(-25 22 9.5)"/>
 <path d="M 14 3 A 10 10 0 0 1 30 7"/><path d="M 14 14 A 10 9 0 0 0 29.5 16"/><path d="M 20 -1 A 10.5 10.5 0 0 1 29 18"/>
</g>
<g transform="rotate(30)" fill="#000" stroke="#000" stroke-linejoin="round" opacity="0.34" font-family="Liberation Sans, sans-serif" font-weight="700" text-anchor="middle"><text x="-23.6" y="29.6" font-size="14" stroke-width="1.2">杭</text><text x="-7.9" y="29.6" font-size="14" stroke-width="1.2">州</text><text x="7.8" y="29.6" font-size="14" stroke-width="1.2">水</text><text x="23.5" y="29.6" font-size="14" stroke-width="1.2">果</text><text x="39.2" y="29.6" font-size="14" stroke-width="1.2">捞</text><text x="-23.5" y="42.6" font-size="12" stroke-width="1.2">H</text><text x="-12.8" y="42.6" font-size="12" stroke-width="1.2">Z</text><text x="-2.2" y="42.6" font-size="12" stroke-width="1.2">F</text><text x="8.5" y="42.6" font-size="12" stroke-width="1.2">R</text><text x="19.1" y="42.6" font-size="12" stroke-width="1.2">U</text><text x="29.8" y="42.6" font-size="12" stroke-width="1.2">I</text><text x="40.4" y="42.6" font-size="12" stroke-width="1.2">T</text></g>
</svg></div><div class="wmw" style="left:341px;top:4px"><svg class="wm" width="120" height="110" viewBox="-45 -25 120 110" style="display:block">
<mask id="M2"><rect x="-45" y="-25" width="120" height="110" fill="#fff"/><g fill="#000"><ellipse cx="2.85" cy="-15.3" rx="3.75" ry="3.5"/><rect x="8.75" y="-19.75" width="5.5" height="7.5" rx="0.8" transform="rotate(15 11.5 -16)"/><circle cx="7.95" cy="-8.25" r="3.55"/><circle cx="15.25" cy="-7.6" r="3.5"/><ellipse cx="-10.1" cy="1" rx="2.5" ry="5.4" transform="rotate(-15 -10.1 1)"/><circle cx="-8.4" cy="5.6" r="1.2"/><ellipse cx="22" cy="9.5" rx="9.4" ry="11" transform="rotate(-25 22 9.5)"/></g></mask>
<g fill="#000" opacity="0.33" mask="url(#M2)"><circle cx="1.5" cy="1" r="17.3"/><circle cx="12.5" cy="12.5" r="12.5"/></g>
<g fill="none" stroke="#000" stroke-opacity="0.28" stroke-width="0.45"><ellipse cx="2.85" cy="-15.3" rx="3.75" ry="3.5"/><rect x="8.75" y="-19.75" width="5.5" height="7.5" rx="0.8" transform="rotate(15 11.5 -16)"/><circle cx="7.95" cy="-8.25" r="3.55"/><circle cx="15.25" cy="-7.6" r="3.5"/>
 <ellipse cx="22" cy="9.5" rx="9.4" ry="11" transform="rotate(-25 22 9.5)"/>
 <path d="M 14 3 A 10 10 0 0 1 30 7"/><path d="M 14 14 A 10 9 0 0 0 29.5 16"/><path d="M 20 -1 A 10.5 10.5 0 0 1 29 18"/>
</g>
<g transform="rotate(30)" fill="#000" stroke="#000" stroke-linejoin="round" opacity="0.34" font-family="Liberation Sans, sans-serif" font-weight="700" text-anchor="middle"><text x="-23.6" y="29.6" font-size="14" stroke-width="1.2">杭</text><text x="-7.9" y="29.6" font-size="14" stroke-width="1.2">州</text><text x="7.8" y="29.6" font-size="14" stroke-width="1.2">水</text><text x="23.5" y="29.6" font-size="14" stroke-width="1.2">果</text><text x="39.2" y="29.6" font-size="14" stroke-width="1.2">捞</text><text x="-23.5" y="42.6" font-size="12" stroke-width="1.2">H</text><text x="-12.8" y="42.6" font-size="12" stroke-width="1.2">Z</text><text x="-2.2" y="42.6" font-size="12" stroke-width="1.2">F</text><text x="8.5" y="42.6" font-size="12" stroke-width="1.2">R</text><text x="19.1" y="42.6" font-size="12" stroke-width="1.2">U</text><text x="29.8" y="42.6" font-size="12" stroke-width="1.2">I</text><text x="40.4" y="42.6" font-size="12" stroke-width="1.2">T</text></g>
</svg></div><div class="wmw" style="left:682.5px;top:4px"><svg class="wm" width="120" height="110" viewBox="-45 -25 120 110" style="display:block">
<mask id="M3"><rect x="-45" y="-25" width="120" height="110" fill="#fff"/><g fill="#000"><ellipse cx="2.85" cy="-15.3" rx="3.75" ry="3.5"/><rect x="8.75" y="-19.75" width="5.5" height="7.5" rx="0.8" transform="rotate(15 11.5 -16)"/><circle cx="7.95" cy="-8.25" r="3.55"/><circle cx="15.25" cy="-7.6" r="3.5"/><ellipse cx="-10.1" cy="1" rx="2.5" ry="5.4" transform="rotate(-15 -10.1 1)"/><circle cx="-8.4" cy="5.6" r="1.2"/><ellipse cx="22" cy="9.5" rx="9.4" ry="11" transform="rotate(-25 22 9.5)"/></g></mask>
<g fill="#000" opacity="0.33" mask="url(#M3)"><circle cx="1.5" cy="1" r="17.3"/><circle cx="12.5" cy="12.5" r="12.5"/></g>
<g fill="none" stroke="#000" stroke-opacity="0.28" stroke-width="0.45"><ellipse cx="2.85" cy="-15.3" rx="3.75" ry="3.5"/><rect x="8.75" y="-19.75" width="5.5" height="7.5" rx="0.8" transform="rotate(15 11.5 -16)"/><circle cx="7.95" cy="-8.25" r="3.55"/><circle cx="15.25" cy="-7.6" r="3.5"/>
 <ellipse cx="22" cy="9.5" rx="9.4" ry="11" transform="rotate(-25 22 9.5)"/>
 <path d="M 14 3 A 10 10 0 0 1 30 7"/><path d="M 14 14 A 10 9 0 0 0 29.5 16"/><path d="M 20 -1 A 10.5 10.5 0 0 1 29 18"/>
</g>
<g transform="rotate(30)" fill="#000" stroke="#000" stroke-linejoin="round" opacity="0.34" font-family="Liberation Sans, sans-serif" font-weight="700" text-anchor="middle"><text x="-23.6" y="29.6" font-size="14" stroke-width="1.2">杭</text><text x="-7.9" y="29.6" font-size="14" stroke-width="1.2">州</text><text x="7.8" y="29.6" font-size="14" stroke-width="1.2">水</text><text x="23.5" y="29.6" font-size="14" stroke-width="1.2">果</text><text x="39.2" y="29.6" font-size="14" stroke-width="1.2">捞</text><text x="-23.5" y="42.6" font-size="12" stroke-width="1.2">H</text><text x="-12.8" y="42.6" font-size="12" stroke-width="1.2">Z</text><text x="-2.2" y="42.6" font-size="12" stroke-width="1.2">F</text><text x="8.5" y="42.6" font-size="12" stroke-width="1.2">R</text><text x="19.1" y="42.6" font-size="12" stroke-width="1.2">U</text><text x="29.8" y="42.6" font-size="12" stroke-width="1.2">I</text><text x="40.4" y="42.6" font-size="12" stroke-width="1.2">T</text></g>
</svg></div><div class="wmw" style="left:-0.5px;top:191.5px"><svg class="wm" width="120" height="110" viewBox="-45 -25 120 110" style="display:block">
<mask id="M4"><rect x="-45" y="-25" width="120" height="110" fill="#fff"/><g fill="#000"><ellipse cx="2.85" cy="-15.3" rx="3.75" ry="3.5"/><rect x="8.75" y="-19.75" width="5.5" height="7.5" rx="0.8" transform="rotate(15 11.5 -16)"/><circle cx="7.95" cy="-8.25" r="3.55"/><circle cx="15.25" cy="-7.6" r="3.5"/><ellipse cx="-10.1" cy="1" rx="2.5" ry="5.4" transform="rotate(-15 -10.1 1)"/><circle cx="-8.4" cy="5.6" r="1.2"/><ellipse cx="22" cy="9.5" rx="9.4" ry="11" transform="rotate(-25 22 9.5)"/></g></mask>
<g fill="#000" opacity="0.33" mask="url(#M4)"><circle cx="1.5" cy="1" r="17.3"/><circle cx="12.5" cy="12.5" r="12.5"/></g>
<g fill="none" stroke="#000" stroke-opacity="0.28" stroke-width="0.45"><ellipse cx="2.85" cy="-15.3" rx="3.75" ry="3.5"/><rect x="8.75" y="-19.75" width="5.5" height="7.5" rx="0.8" transform="rotate(15 11.5 -16)"/><circle cx="7.95" cy="-8.25" r="3.55"/><circle cx="15.25" cy="-7.6" r="3.5"/>
 <ellipse cx="22" cy="9.5" rx="9.4" ry="11" transform="rotate(-25 22 9.5)"/>
 <path d="M 14 3 A 10 10 0 0 1 30 7"/><path d="M 14 14 A 10 9 0 0 0 29.5 16"/><path d="M 20 -1 A 10.5 10.5 0 0 1 29 18"/>
</g>
<g transform="rotate(30)" fill="#000" stroke="#000" stroke-linejoin="round" opacity="0.34" font-family="Liberation Sans, sans-serif" font-weight="700" text-anchor="middle"><text x="-23.6" y="29.6" font-size="14" stroke-width="1.2">杭</text><text x="-7.9" y="29.6" font-size="14" stroke-width="1.2">州</text><text x="7.8" y="29.6" font-size="14" stroke-width="1.2">水</text><text x="23.5" y="29.6" font-size="14" stroke-width="1.2">果</text><text x="39.2" y="29.6" font-size="14" stroke-width="1.2">捞</text><text x="-23.5" y="42.6" font-size="12" stroke-width="1.2">H</text><text x="-12.8" y="42.6" font-size="12" stroke-width="1.2">Z</text><text x="-2.2" y="42.6" font-size="12" stroke-width="1.2">F</text><text x="8.5" y="42.6" font-size="12" stroke-width="1.2">R</text><text x="19.1" y="42.6" font-size="12" stroke-width="1.2">U</text><text x="29.8" y="42.6" font-size="12" stroke-width="1.2">I</text><text x="40.4" y="42.6" font-size="12" stroke-width="1.2">T</text></g>
</svg></div><div class="wmw" style="left:341px;top:191.5px"><svg class="wm" width="120" height="110" viewBox="-45 -25 120 110" style="display:block">
<mask id="M5"><rect x="-45" y="-25" width="120" height="110" fill="#fff"/><g fill="#000"><ellipse cx="2.85" cy="-15.3" rx="3.75" ry="3.5"/><rect x="8.75" y="-19.75" width="5.5" height="7.5" rx="0.8" transform="rotate(15 11.5 -16)"/><circle cx="7.95" cy="-8.25" r="3.55"/><circle cx="15.25" cy="-7.6" r="3.5"/><ellipse cx="-10.1" cy="1" rx="2.5" ry="5.4" transform="rotate(-15 -10.1 1)"/><circle cx="-8.4" cy="5.6" r="1.2"/><ellipse cx="22" cy="9.5" rx="9.4" ry="11" transform="rotate(-25 22 9.5)"/></g></mask>
<g fill="#000" opacity="0.33" mask="url(#M5)"><circle cx="1.5" cy="1" r="17.3"/><circle cx="12.5" cy="12.5" r="12.5"/></g>
<g fill="none" stroke="#000" stroke-opacity="0.28" stroke-width="0.45"><ellipse cx="2.85" cy="-15.3" rx="3.75" ry="3.5"/><rect x="8.75" y="-19.75" width="5.5" height="7.5" rx="0.8" transform="rotate(15 11.5 -16)"/><circle cx="7.95" cy="-8.25" r="3.55"/><circle cx="15.25" cy="-7.6" r="3.5"/>
 <ellipse cx="22" cy="9.5" rx="9.4" ry="11" transform="rotate(-25 22 9.5)"/>
 <path d="M 14 3 A 10 10 0 0 1 30 7"/><path d="M 14 14 A 10 9 0 0 0 29.5 16"/><path d="M 20 -1 A 10.5 10.5 0 0 1 29 18"/>
</g>
<g transform="rotate(30)" fill="#000" stroke="#000" stroke-linejoin="round" opacity="0.34" font-family="Liberation Sans, sans-serif" font-weight="700" text-anchor="middle"><text x="-23.6" y="29.6" font-size="14" stroke-width="1.2">杭</text><text x="-7.9" y="29.6" font-size="14" stroke-width="1.2">州</text><text x="7.8" y="29.6" font-size="14" stroke-width="1.2">水</text><text x="23.5" y="29.6" font-size="14" stroke-width="1.2">果</text><text x="39.2" y="29.6" font-size="14" stroke-width="1.2">捞</text><text x="-23.5" y="42.6" font-size="12" stroke-width="1.2">H</text><text x="-12.8" y="42.6" font-size="12" stroke-width="1.2">Z</text><text x="-2.2" y="42.6" font-size="12" stroke-width="1.2">F</text><text x="8.5" y="42.6" font-size="12" stroke-width="1.2">R</text><text x="19.1" y="42.6" font-size="12" stroke-width="1.2">U</text><text x="29.8" y="42.6" font-size="12" stroke-width="1.2">I</text><text x="40.4" y="42.6" font-size="12" stroke-width="1.2">T</text></g>
</svg></div><div class="wmw" style="left:682.5px;top:191.5px"><svg class="wm" width="120" height="110" viewBox="-45 -25 120 110" style="display:block">
<mask id="M6"><rect x="-45" y="-25" width="120" height="110" fill="#fff"/><g fill="#000"><ellipse cx="2.85" cy="-15.3" rx="3.75" ry="3.5"/><rect x="8.75" y="-19.75" width="5.5" height="7.5" rx="0.8" transform="rotate(15 11.5 -16)"/><circle cx="7.95" cy="-8.25" r="3.55"/><circle cx="15.25" cy="-7.6" r="3.5"/><ellipse cx="-10.1" cy="1" rx="2.5" ry="5.4" transform="rotate(-15 -10.1 1)"/><circle cx="-8.4" cy="5.6" r="1.2"/><ellipse cx="22" cy="9.5" rx="9.4" ry="11" transform="rotate(-25 22 9.5)"/></g></mask>
<g fill="#000" opacity="0.33" mask="url(#M6)"><circle cx="1.5" cy="1" r="17.3"/><circle cx="12.5" cy="12.5" r="12.5"/></g>
<g fill="none" stroke="#000" stroke-opacity="0.28" stroke-width="0.45"><ellipse cx="2.85" cy="-15.3" rx="3.75" ry="3.5"/><rect x="8.75" y="-19.75" width="5.5" height="7.5" rx="0.8" transform="rotate(15 11.5 -16)"/><circle cx="7.95" cy="-8.25" r="3.55"/><circle cx="15.25" cy="-7.6" r="3.5"/>
 <ellipse cx="22" cy="9.5" rx="9.4" ry="11" transform="rotate(-25 22 9.5)"/>
 <path d="M 14 3 A 10 10 0 0 1 30 7"/><path d="M 14 14 A 10 9 0 0 0 29.5 16"/><path d="M 20 -1 A 10.5 10.5 0 0 1 29 18"/>
</g>
<g transform="rotate(30)" fill="#000" stroke="#000" stroke-linejoin="round" opacity="0.34" font-family="Liberation Sans, sans-serif" font-weight="700" text-anchor="middle"><text x="-23.6" y="29.6" font-size="14" stroke-width="1.2">杭</text><text x="-7.9" y="29.6" font-size="14" stroke-width="1.2">州</text><text x="7.8" y="29.6" font-size="14" stroke-width="1.2">水</text><text x="23.5" y="29.6" font-size="14" stroke-width="1.2">果</text><text x="39.2" y="29.6" font-size="14" stroke-width="1.2">捞</text><text x="-23.5" y="42.6" font-size="12" stroke-width="1.2">H</text><text x="-12.8" y="42.6" font-size="12" stroke-width="1.2">Z</text><text x="-2.2" y="42.6" font-size="12" stroke-width="1.2">F</text><text x="8.5" y="42.6" font-size="12" stroke-width="1.2">R</text><text x="19.1" y="42.6" font-size="12" stroke-width="1.2">U</text><text x="29.8" y="42.6" font-size="12" stroke-width="1.2">I</text><text x="40.4" y="42.6" font-size="12" stroke-width="1.2">T</text></g>
</svg></div><div class="wmw" style="left:-0.5px;top:380px"><svg class="wm" width="120" height="110" viewBox="-45 -25 120 110" style="display:block">
<mask id="M7"><rect x="-45" y="-25" width="120" height="110" fill="#fff"/><g fill="#000"><ellipse cx="2.85" cy="-15.3" rx="3.75" ry="3.5"/><rect x="8.75" y="-19.75" width="5.5" height="7.5" rx="0.8" transform="rotate(15 11.5 -16)"/><circle cx="7.95" cy="-8.25" r="3.55"/><circle cx="15.25" cy="-7.6" r="3.5"/><ellipse cx="-10.1" cy="1" rx="2.5" ry="5.4" transform="rotate(-15 -10.1 1)"/><circle cx="-8.4" cy="5.6" r="1.2"/><ellipse cx="22" cy="9.5" rx="9.4" ry="11" transform="rotate(-25 22 9.5)"/></g></mask>
<g fill="#000" opacity="0.33" mask="url(#M7)"><circle cx="1.5" cy="1" r="17.3"/><circle cx="12.5" cy="12.5" r="12.5"/></g>
<g fill="none" stroke="#000" stroke-opacity="0.28" stroke-width="0.45"><ellipse cx="2.85" cy="-15.3" rx="3.75" ry="3.5"/><rect x="8.75" y="-19.75" width="5.5" height="7.5" rx="0.8" transform="rotate(15 11.5 -16)"/><circle cx="7.95" cy="-8.25" r="3.55"/><circle cx="15.25" cy="-7.6" r="3.5"/>
 <ellipse cx="22" cy="9.5" rx="9.4" ry="11" transform="rotate(-25 22 9.5)"/>
 <path d="M 14 3 A 10 10 0 0 1 30 7"/><path d="M 14 14 A 10 9 0 0 0 29.5 16"/><path d="M 20 -1 A 10.5 10.5 0 0 1 29 18"/>
</g>
<g transform="rotate(30)" fill="#000" stroke="#000" stroke-linejoin="round" opacity="0.34" font-family="Liberation Sans, sans-serif" font-weight="700" text-anchor="middle"><text x="-23.6" y="29.6" font-size="14" stroke-width="1.2">杭</text><text x="-7.9" y="29.6" font-size="14" stroke-width="1.2">州</text><text x="7.8" y="29.6" font-size="14" stroke-width="1.2">水</text><text x="23.5" y="29.6" font-size="14" stroke-width="1.2">果</text><text x="39.2" y="29.6" font-size="14" stroke-width="1.2">捞</text><text x="-23.5" y="42.6" font-size="12" stroke-width="1.2">H</text><text x="-12.8" y="42.6" font-size="12" stroke-width="1.2">Z</text><text x="-2.2" y="42.6" font-size="12" stroke-width="1.2">F</text><text x="8.5" y="42.6" font-size="12" stroke-width="1.2">R</text><text x="19.1" y="42.6" font-size="12" stroke-width="1.2">U</text><text x="29.8" y="42.6" font-size="12" stroke-width="1.2">I</text><text x="40.4" y="42.6" font-size="12" stroke-width="1.2">T</text></g>
</svg></div><div class="wmw" style="left:341px;top:380px"><svg class="wm" width="120" height="110" viewBox="-45 -25 120 110" style="display:block">
<mask id="M8"><rect x="-45" y="-25" width="120" height="110" fill="#fff"/><g fill="#000"><ellipse cx="2.85" cy="-15.3" rx="3.75" ry="3.5"/><rect x="8.75" y="-19.75" width="5.5" height="7.5" rx="0.8" transform="rotate(15 11.5 -16)"/><circle cx="7.95" cy="-8.25" r="3.55"/><circle cx="15.25" cy="-7.6" r="3.5"/><ellipse cx="-10.1" cy="1" rx="2.5" ry="5.4" transform="rotate(-15 -10.1 1)"/><circle cx="-8.4" cy="5.6" r="1.2"/><ellipse cx="22" cy="9.5" rx="9.4" ry="11" transform="rotate(-25 22 9.5)"/></g></mask>
<g fill="#000" opacity="0.33" mask="url(#M8)"><circle cx="1.5" cy="1" r="17.3"/><circle cx="12.5" cy="12.5" r="12.5"/></g>
<g fill="none" stroke="#000" stroke-opacity="0.28" stroke-width="0.45"><ellipse cx="2.85" cy="-15.3" rx="3.75" ry="3.5"/><rect x="8.75" y="-19.75" width="5.5" height="7.5" rx="0.8" transform="rotate(15 11.5 -16)"/><circle cx="7.95" cy="-8.25" r="3.55"/><circle cx="15.25" cy="-7.6" r="3.5"/>
 <ellipse cx="22" cy="9.5" rx="9.4" ry="11" transform="rotate(-25 22 9.5)"/>
 <path d="M 14 3 A 10 10 0 0 1 30 7"/><path d="M 14 14 A 10 9 0 0 0 29.5 16"/><path d="M 20 -1 A 10.5 10.5 0 0 1 29 18"/>
</g>
<g transform="rotate(30)" fill="#000" stroke="#000" stroke-linejoin="round" opacity="0.34" font-family="Liberation Sans, sans-serif" font-weight="700" text-anchor="middle"><text x="-23.6" y="29.6" font-size="14" stroke-width="1.2">杭</text><text x="-7.9" y="29.6" font-size="14" stroke-width="1.2">州</text><text x="7.8" y="29.6" font-size="14" stroke-width="1.2">水</text><text x="23.5" y="29.6" font-size="14" stroke-width="1.2">果</text><text x="39.2" y="29.6" font-size="14" stroke-width="1.2">捞</text><text x="-23.5" y="42.6" font-size="12" stroke-width="1.2">H</text><text x="-12.8" y="42.6" font-size="12" stroke-width="1.2">Z</text><text x="-2.2" y="42.6" font-size="12" stroke-width="1.2">F</text><text x="8.5" y="42.6" font-size="12" stroke-width="1.2">R</text><text x="19.1" y="42.6" font-size="12" stroke-width="1.2">U</text><text x="29.8" y="42.6" font-size="12" stroke-width="1.2">I</text><text x="40.4" y="42.6" font-size="12" stroke-width="1.2">T</text></g>
</svg></div><div class="wmw" style="left:682.5px;top:380px"><svg class="wm" width="120" height="110" viewBox="-45 -25 120 110" style="display:block">
<mask id="M9"><rect x="-45" y="-25" width="120" height="110" fill="#fff"/><g fill="#000"><ellipse cx="2.85" cy="-15.3" rx="3.75" ry="3.5"/><rect x="8.75" y="-19.75" width="5.5" height="7.5" rx="0.8" transform="rotate(15 11.5 -16)"/><circle cx="7.95" cy="-8.25" r="3.55"/><circle cx="15.25" cy="-7.6" r="3.5"/><ellipse cx="-10.1" cy="1" rx="2.5" ry="5.4" transform="rotate(-15 -10.1 1)"/><circle cx="-8.4" cy="5.6" r="1.2"/><ellipse cx="22" cy="9.5" rx="9.4" ry="11" transform="rotate(-25 22 9.5)"/></g></mask>
<g fill="#000" opacity="0.33" mask="url(#M9)"><circle cx="1.5" cy="1" r="17.3"/><circle cx="12.5" cy="12.5" r="12.5"/></g>
<g fill="none" stroke="#000" stroke-opacity="0.28" stroke-width="0.45"><ellipse cx="2.85" cy="-15.3" rx="3.75" ry="3.5"/><rect x="8.75" y="-19.75" width="5.5" height="7.5" rx="0.8" transform="rotate(15 11.5 -16)"/><circle cx="7.95" cy="-8.25" r="3.55"/><circle cx="15.25" cy="-7.6" r="3.5"/>
 <ellipse cx="22" cy="9.5" rx="9.4" ry="11" transform="rotate(-25 22 9.5)"/>
 <path d="M 14 3 A 10 10 0 0 1 30 7"/><path d="M 14 14 A 10 9 0 0 0 29.5 16"/><path d="M 20 -1 A 10.5 10.5 0 0 1 29 18"/>
</g>
<g transform="rotate(30)" fill="#000" stroke="#000" stroke-linejoin="round" opacity="0.34" font-family="Liberation Sans, sans-serif" font-weight="700" text-anchor="middle"><text x="-23.6" y="29.6" font-size="14" stroke-width="1.2">杭</text><text x="-7.9" y="29.6" font-size="14" stroke-width="1.2">州</text><text x="7.8" y="29.6" font-size="14" stroke-width="1.2">水</text><text x="23.5" y="29.6" font-size="14" stroke-width="1.2">果</text><text x="39.2" y="29.6" font-size="14" stroke-width="1.2">捞</text><text x="-23.5" y="42.6" font-size="12" stroke-width="1.2">H</text><text x="-12.8" y="42.6" font-size="12" stroke-width="1.2">Z</text><text x="-2.2" y="42.6" font-size="12" stroke-width="1.2">F</text><text x="8.5" y="42.6" font-size="12" stroke-width="1.2">R</text><text x="19.1" y="42.6" font-size="12" stroke-width="1.2">U</text><text x="29.8" y="42.6" font-size="12" stroke-width="1.2">I</text><text x="40.4" y="42.6" font-size="12" stroke-width="1.2">T</text></g>
</svg></div></div>
<div id="botfade"></div>
<div id="leftedge"></div><div id="rightedge"></div><div id="botedge"></div>
</div></body></html>
